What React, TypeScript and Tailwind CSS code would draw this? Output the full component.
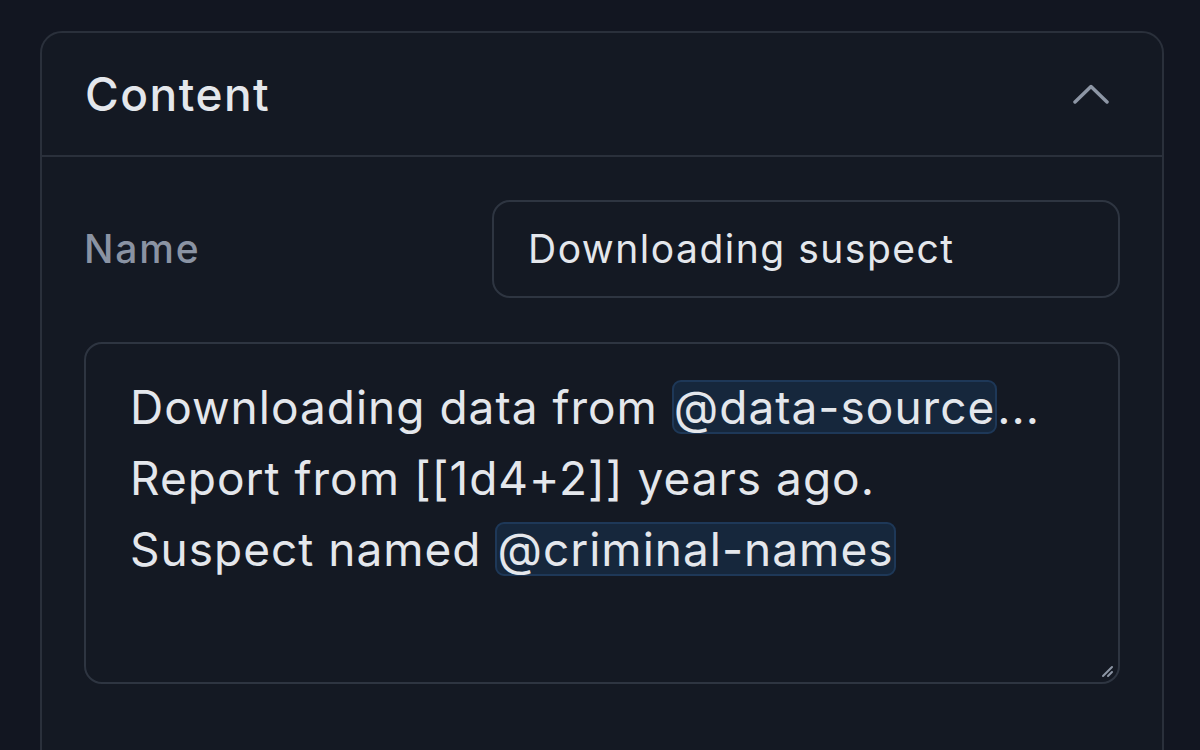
import * as React from "react";

function Mention({ children }: { children: React.ReactNode }) {
  return (
    <span className="inline-block rounded-[9px] border-2 border-[#1e3858] bg-[#16273c] leading-[50px]">{children}</span>
  );
}

export default function App() {
  return (
    <div className="h-[750px] w-[1200px] overflow-hidden bg-[#121621] pl-[40px] pr-[36px] pt-[31px] font-['Inter',sans-serif] text-[#e4e7ec]">
      <div className="h-[760px] rounded-[22px] border-2 border-[#2a303b] bg-[#141923]">
        <div className="flex h-[124px] items-center justify-between border-b-2 border-[#2a303b] pl-[43px] pr-[53px]">
          <span className="text-[46px] font-medium tracking-[1.5px]">Content</span>
          <svg width="36" height="22" viewBox="0 0 36 22" fill="none" stroke="#8d96a5" strokeWidth="3.5" strokeLinecap="round" strokeLinejoin="round">
            <path d="M2 19 L18 3.5 L34 19" />
          </svg>
        </div>
        <div className="flex flex-col gap-[44px] px-[42px] pt-[43px]">
          <div className="flex items-center">
            <span className="w-[408px] text-[39px] font-medium tracking-[1.8px] text-[#8a93a3]">Name</span>
            <div className="flex h-[98px] flex-1 items-center rounded-[18px] border-2 border-[#2e3541] px-[34px] text-[39px] tracking-[1.5px]">
              Downloading suspect
            </div>
          </div>
          <div className="relative h-[342px] rounded-[18px] border-2 border-[#2e3541] px-[44px] pt-[28px] text-[46px] leading-[71px] tracking-[1px]">
            <div>
              Downloading data from <Mention>@data-source</Mention>...
            </div>
            <div>Report from [[1d4+2]] years ago.</div>
            <div>
              Suspect named <Mention>@criminal-names</Mention>
            </div>
            <svg className="absolute bottom-[4px] right-[4px]" width="14" height="14" viewBox="0 0 14 14" stroke="#8d96a5" strokeWidth="2" strokeLinecap="round">
              <path d="M12 3 L3 12 M12 8 L8 12" />
            </svg>
          </div>
        </div>
      </div>
    </div>
  );
}
